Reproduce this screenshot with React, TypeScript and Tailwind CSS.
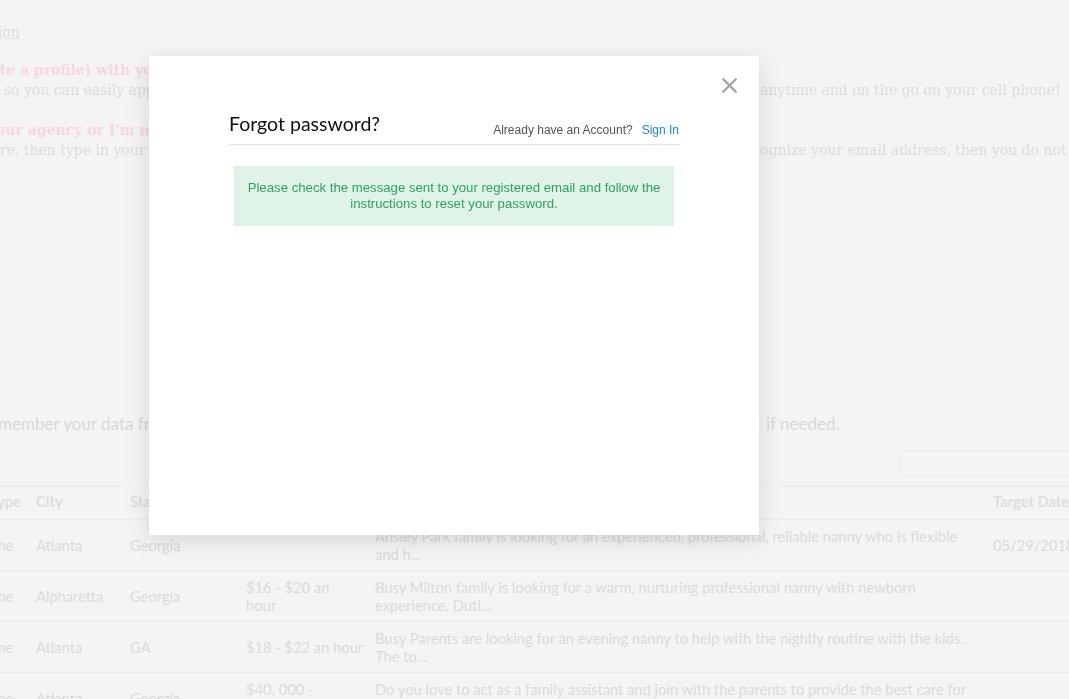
import { X } from "lucide-react";

const rows = [
  {
    type: "Full-time",
    city: "Atlanta",
    state: "Georgia",
    salary: "",
    desc: "Ansley Park family is looking for an experienced, professional, reliable nanny who is flexible and h...",
    date: "05/29/2018",
  },
  {
    type: "Full-time",
    city: "Alpharetta",
    state: "Georgia",
    salary: "$16 - $20 an\nhour",
    desc: "Busy Milton family is looking for a warm, nurturing professional nanny with newborn experience. Duti...",
    date: "",
  },
  {
    type: "Full-time",
    city: "Atlanta",
    state: "GA",
    salary: "$18 - $22 an hour",
    desc: "Busy Parents are looking for an evening nanny to help with the nightly routine with the kids. The to...",
    date: "",
  },
  {
    type: "Full-time",
    city: "Atlanta",
    state: "Georgia",
    salary: "$40, 000 -\n$45, 000 a year",
    desc: "Do you love to act as a family assistant and join with the parents to provide the best care for their...",
    date: "",
  },
];

const cols = "grid grid-cols-[80px_94px_116px_129px_618px_160px]";

function Background() {
  return (
    <div className="h-[699px] overflow-hidden bg-[#f4f4f4]">
      <div className="pt-[22px] font-['DejaVu_Serif',serif] text-[14px] leading-5 text-[#dcdcdc]">
        <p className="-ml-[61px] whitespace-nowrap">
          <span className="underline decoration-[#e2e2e2]">Application </span>
        </p>
        <div className="mt-[18px] -ml-[48px] whitespace-nowrap font-bold text-[#f8d5e2]">
          e create a profile) with your agency?
        </div>
        <div className="flex whitespace-nowrap">
          <span className="w-[760px] shrink-0 overflow-hidden indent-[-5px]">
            , so you can easily apply for jobs and keep your information up to date
          </span>
          <span>anytime and on the go on your cell phone!</span>
        </div>
        <div className="mt-5 -ml-[4px] whitespace-nowrap font-bold text-[#f8d5e2]">
          our agency or I'm not sure?
        </div>
        <div className="flex whitespace-nowrap">
          <span className="w-[760px] shrink-0 overflow-hidden">
            re, then type in your email address. If the system does not reco
          </span>
          <span>ognize your email address, then you do not have an account yet.</span>
        </div>
      </div>

      <div className="mt-[252px] flex whitespace-nowrap font-['Lato',sans-serif] text-[17px] leading-6 text-[#d8d8d8]">
        <span className="w-[768px] shrink-0 overflow-hidden -ml-[2px]">
          member your data from the previous applications, so you can review and edi
        </span>
        <span>if needed.</span>
      </div>

      <div className="mt-[14px] flex justify-end">
        <div className="h-[27px] w-[200px] -mr-[30px] rounded border border-[#ebebeb]" />
      </div>

      <div className="mt-[9px] -ml-[52px] font-['Lato',sans-serif] text-[14.7px] text-[#dadada]">
        <div className={`${cols} h-[34px] items-center border-y border-[#ececec] pb-[3px] font-bold text-[#dddddd]`}>
          <div className="px-2 whitespace-nowrap">Care Type</div>
          <div className="px-2">City</div>
          <div className="px-2">State</div>
          <div className="px-2">Salary</div>
          <div className="px-2">Description</div>
          <div className="px-2 whitespace-nowrap">Target Date</div>
        </div>
        {rows.map((r, i) => (
          <div key={i} className={`${cols} h-[51px] items-center border-b border-[#ececec] leading-[18px]`}>
            <div className="px-2 whitespace-nowrap">{r.type}</div>
            <div className="px-2">{r.city}</div>
            <div className="px-2">{r.state}</div>
            <div className="pl-2 whitespace-pre">{r.salary}</div>
            <div className="px-2">{r.desc}</div>
            <div className="px-2 whitespace-nowrap">{r.date}</div>
          </div>
        ))}
      </div>
    </div>
  );
}

function ForgotModal() {
  return (
    <div className="fixed left-[149px] top-[56px] h-[479px] w-[610px] bg-white px-[80px] pt-[56px] shadow-[0_5px_22px_rgba(0,0,0,0.13)]">
      <button className="absolute right-[17px] top-[17px] text-[#a3a3a3]">
        <X size={25} strokeWidth={2.3} />
      </button>

      <div className="flex items-end justify-between border-b border-dotted border-[#d2d2d2] pb-2">
        <h2 className="font-['Lato',sans-serif] text-[19.5px] leading-6 text-[#111]">Forgot password?</h2>
        <div className="-mb-[2px] font-['Liberation_Sans',Arial,sans-serif] text-[12px] leading-4 text-[#555]">
          Already have an Account?
          <a className="ml-[9px] text-[#1f86dc]">Sign In</a>
        </div>
      </div>

      <div className="mx-[5px] mt-[21px] bg-[#dff3e7] px-3 py-[14px] text-center font-['Liberation_Sans',Arial,sans-serif] text-[13.2px] leading-4 text-[#33a064]">
        Please check the message sent to your registered email and follow the
        <br />
        instructions to reset your password.
      </div>
    </div>
  );
}

export default function App() {
  return (
    <div className="relative h-[699px] w-full overflow-hidden">
      <Background />
      <ForgotModal />
    </div>
  );
}
